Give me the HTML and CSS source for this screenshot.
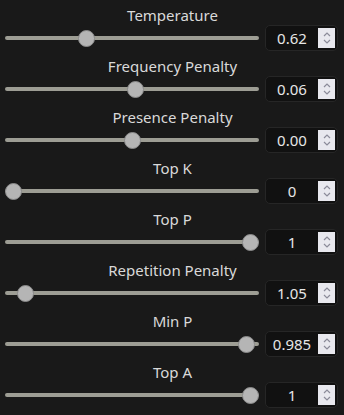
FILE: index.html
```html
<!DOCTYPE html>
<html>
<head>
<meta charset="utf-8">
<link rel="stylesheet" href="styles.css">
</head>
<body>
<div class="panel">
  <div class="setting">
    <div class="label">Temperature</div>
    <div class="row">
      <input class="slider" type="range" min="0" max="2" step="0.01" value="0.62">
      <div class="num"><span class="val">0.62</span><span class="spin"><svg width="10" height="14" viewBox="0 0 10 14"><path d="M2 5 L5 2 L8 5 M2 9 L5 12 L8 9" fill="none" stroke="#8b8b99" stroke-width="1.2"/></svg></span></div>
    </div>
  </div>
  <div class="setting">
    <div class="label">Frequency Penalty</div>
    <div class="row">
      <input class="slider" type="range" min="-2" max="2" step="0.01" value="0.06">
      <div class="num"><span class="val">0.06</span><span class="spin"><svg width="10" height="14" viewBox="0 0 10 14"><path d="M2 5 L5 2 L8 5 M2 9 L5 12 L8 9" fill="none" stroke="#8b8b99" stroke-width="1.2"/></svg></span></div>
    </div>
  </div>
  <div class="setting">
    <div class="label">Presence Penalty</div>
    <div class="row">
      <input class="slider" type="range" min="-2" max="2" step="0.01" value="0">
      <div class="num"><span class="val">0.00</span><span class="spin"><svg width="10" height="14" viewBox="0 0 10 14"><path d="M2 5 L5 2 L8 5 M2 9 L5 12 L8 9" fill="none" stroke="#8b8b99" stroke-width="1.2"/></svg></span></div>
    </div>
  </div>
  <div class="setting">
    <div class="label">Top K</div>
    <div class="row">
      <input class="slider" type="range" min="0" max="100" step="1" value="0">
      <div class="num"><span class="val">0</span><span class="spin"><svg width="10" height="14" viewBox="0 0 10 14"><path d="M2 5 L5 2 L8 5 M2 9 L5 12 L8 9" fill="none" stroke="#8b8b99" stroke-width="1.2"/></svg></span></div>
    </div>
  </div>
  <div class="setting">
    <div class="label">Top P</div>
    <div class="row">
      <input class="slider" type="range" min="0" max="1" step="0.01" value="1">
      <div class="num"><span class="val">1</span><span class="spin"><svg width="10" height="14" viewBox="0 0 10 14"><path d="M2 5 L5 2 L8 5 M2 9 L5 12 L8 9" fill="none" stroke="#8b8b99" stroke-width="1.2"/></svg></span></div>
    </div>
  </div>
  <div class="setting">
    <div class="label">Repetition Penalty</div>
    <div class="row">
      <input class="slider" type="range" min="1" max="2" step="0.01" value="1.05">
      <div class="num"><span class="val">1.05</span><span class="spin"><svg width="10" height="14" viewBox="0 0 10 14"><path d="M2 5 L5 2 L8 5 M2 9 L5 12 L8 9" fill="none" stroke="#8b8b99" stroke-width="1.2"/></svg></span></div>
    </div>
  </div>
  <div class="setting">
    <div class="label">Min P</div>
    <div class="row">
      <input class="slider" type="range" min="0" max="1" step="0.001" value="0.985">
      <div class="num"><span class="val">0.985</span><span class="spin"><svg width="10" height="14" viewBox="0 0 10 14"><path d="M2 5 L5 2 L8 5 M2 9 L5 12 L8 9" fill="none" stroke="#8b8b99" stroke-width="1.2"/></svg></span></div>
    </div>
  </div>
  <div class="setting">
    <div class="label">Top A</div>
    <div class="row">
      <input class="slider" type="range" min="0" max="1" step="0.01" value="1">
      <div class="num"><span class="val">1</span><span class="spin"><svg width="10" height="14" viewBox="0 0 10 14"><path d="M2 5 L5 2 L8 5 M2 9 L5 12 L8 9" fill="none" stroke="#8b8b99" stroke-width="1.2"/></svg></span></div>
    </div>
  </div>
</div>
</body>
</html>
```
FILE: styles.css
```css
html, body {
  margin: 0;
  padding: 0;
  background: #191919;
}
body {
  font-family: "Noto Sans", "Open Sans", sans-serif;
  color: #d9d9d9;
  font-size: 15px;
}
.panel {
  display: flex;
  flex-direction: column;
  gap: 5px;
  padding: 5px 6px 0 5px;
}
.label {
  text-align: center;
  height: 20px;
  line-height: 20px;
  padding-left: 2px;
}
.row {
  display: flex;
  align-items: center;
  gap: 6px;
  height: 26px;
}
.slider {
  -webkit-appearance: none;
  appearance: none;
  flex: 1;
  margin: 0;
  height: 18px;
  background: transparent;
}
.slider::-webkit-slider-runnable-track {
  height: 4px;
  border-radius: 2px;
  background: #9d9d94;
}
.slider::-webkit-slider-thumb {
  -webkit-appearance: none;
  width: 17px;
  height: 17px;
  border-radius: 50%;
  background: #b5b5b5;
  border: 1px solid #8a8a8a;
  box-sizing: border-box;
  margin-top: -6.5px;
}
.num {
  width: 73px;
  height: 26px;
  box-sizing: border-box;
  background: #111111;
  border: 1px solid #262626;
  border-radius: 5px;
  display: flex;
  align-items: center;
  padding: 0 2px 0 0;
}
.val {
  flex: 1;
  text-align: center;
  color: #e6e6e6;
  font-size: 15px;
}
.spin {
  width: 17px;
  height: 20px;
  background: #e8e8ee;
  display: flex;
  align-items: center;
  justify-content: center;
}
```
